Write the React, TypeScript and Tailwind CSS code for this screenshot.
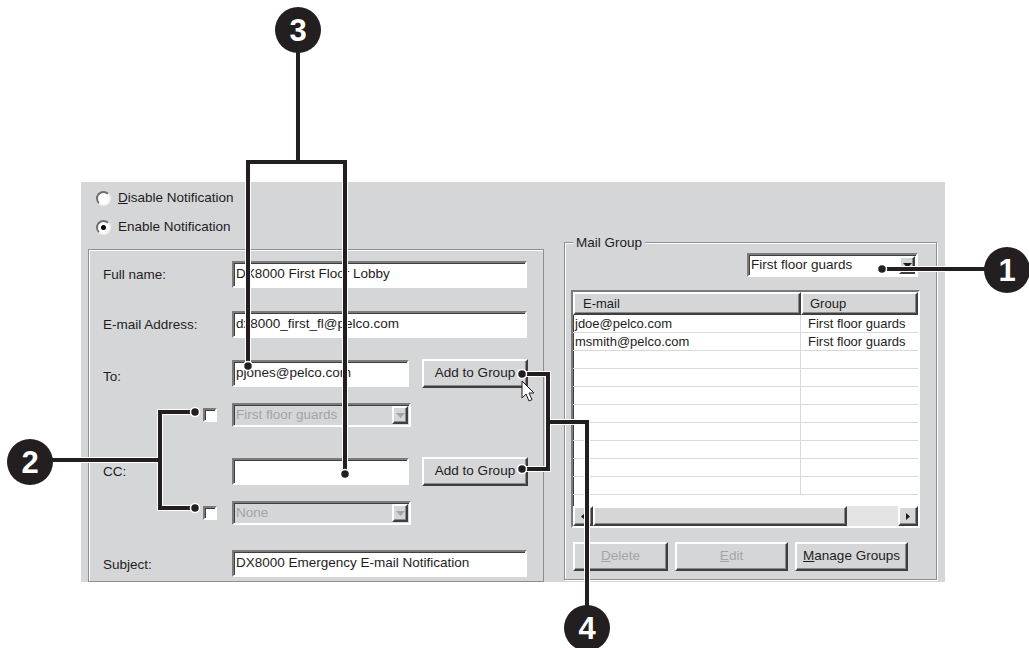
import React from 'react';

const sunken = 'border-2 border-t-[#7b7b7b] border-l-[#7b7b7b] border-b-white border-r-white shadow-[inset_1px_1px_0_#3f3f3f]';
const raised = 'border-2 border-t-white border-l-white border-b-[#3f3f3f] border-r-[#3f3f3f] shadow-[inset_-1px_-1px_0_#8a8a8a]';

const TextBox = ({ value, w }: { value: string; w: string }) => (
    <div className={`${sunken} ${w} h-[27px] bg-white flex items-center pl-[2px] whitespace-nowrap overflow-hidden`}>
        {value}
    </div>
);

const Button = ({ children, w, disabled }: { children: React.ReactNode; w: string; disabled?: boolean }) => (
    <div className={`${raised} ${w} h-[29px] bg-[#d5d6d8] flex items-center justify-center ${disabled ? 'text-[#a3a4a6]' : ''}`}>
        {children}
    </div>
);

const Arrow = ({ color }: { color: string }) => (
    <svg width="9" height="5" viewBox="0 0 9 5">
        <path d="M0 0H9L4.5 5Z" fill={color} />
    </svg>
);

const DisabledCombo = ({ value }: { value: string }) => (
    <div className={`${sunken} w-[179px] h-[24px] bg-[#d5d6d8] flex items-center justify-between text-[#a3a4a6]`}>
        <span className="pl-[2px]">{value}</span>
        <div className={`${raised} w-[16px] h-[18px] mr-[1px] flex items-center justify-center`}>
            <Arrow color="#a3a4a6" />
        </div>
    </div>
);

const CheckBox = () => (
    <div className={`${sunken} w-[14px] h-[14px] bg-white`} />
);

const Radio = ({ checked }: { checked?: boolean }) => (
    <div className="w-[15px] h-[15px] rounded-full bg-white border-2 border-t-[#6f6f6f] border-l-[#6f6f6f] border-b-[#f2f2f2] border-r-[#f2f2f2] flex items-center justify-center">
        {checked && <div className="w-[5px] h-[5px] rounded-full bg-black" />}
    </div>
);

const rows = [
    { email: 'jdoe@pelco.com', group: 'First floor guards' },
    { email: 'msmith@pelco.com', group: 'First floor guards' },
    { email: '', group: '' },
    { email: '', group: '' },
    { email: '', group: '' },
    { email: '', group: '' },
    { email: '', group: '' },
    { email: '', group: '' },
    { email: '', group: '' },
    { email: '', group: '' },
];

const Callout = ({ cx, cy, n }: { cx: number; cy: number; n: string }) => (
    <g>
        <circle cx={cx} cy={cy} r="23" fill="#231f20" />
        <text x={cx} y={cy + 11} textAnchor="middle" fill="#fff" fontSize="31" fontWeight="700"
            fontFamily="'Liberation Sans', Arial, sans-serif">{n}</text>
    </g>
);

const Dot = ({ x, y }: { x: number; y: number }) => (
    <circle cx={x} cy={y} r="4.5" fill="#231f20" stroke="#fff" strokeWidth="1.5" />
);

const App: React.FC = () => {
    return (
        <div className="relative w-[1029px] h-[648px] bg-white overflow-hidden font-['Liberation_Sans',Arial,sans-serif] text-[13.5px] text-[#1d1d1d]">
            <div className="pt-[182px] pl-[81px]">
                <div className="flex w-[864px] h-[400px] bg-[#d5d6d8] overflow-hidden">
                    {/* left side */}
                    <div className="flex flex-col pl-[7px] w-[463px] shrink-0">
                        <div className="flex flex-col pl-[8px] pt-[7px] gap-[11px]">
                            <div className="flex items-center gap-[7px] h-[18px]">
                                <Radio />
                                <span><span className="underline">D</span>isable Notification</span>
                            </div>
                            <div className="flex items-center gap-[7px] h-[18px]">
                                <Radio checked />
                                <span>Enable Notification</span>
                            </div>
                        </div>
                        <div className="mt-[13px] w-[456px] h-[400px] border border-[#8d8e90] shadow-[inset_1px_1px_0_#fff] pt-[11px]">
                            <div className="flex items-center h-[27px]">
                                <span className="w-[143px] pl-[14px] pt-[2px]">Full name:</span>
                                <TextBox value="DX8000 First Floor Lobby" w="w-[295px]" />
                            </div>
                            <div className="flex items-center h-[26px] mt-[23px]">
                                <span className="w-[143px] pl-[14px] pt-[2px]">E-mail Address:</span>
                                <TextBox value="dx8000_first_fl@pelco.com" w="w-[295px]" />
                            </div>
                            <div className="flex items-center h-[28px] mt-[22px]">
                                <span className="w-[143px] pl-[14px] pt-[8px]">To:</span>
                                <TextBox value="pjones@pelco.com" w="w-[177px]" />
                                <div className="ml-[13px]">
                                    <Button w="w-[106px]">Add to Group</Button>
                                </div>
                            </div>
                            <div className="flex items-center h-[24px] mt-[16px]">
                                <div className="w-[143px] flex justify-end pr-[15px]">
                                    <CheckBox />
                                </div>
                                <DisabledCombo value="First floor guards" />
                            </div>
                            <div className="flex items-center h-[28px] mt-[30px]">
                                <span className="w-[143px] pl-[14px] pt-[2px]">CC:</span>
                                <TextBox value="" w="w-[177px]" />
                                <div className="ml-[13px]">
                                    <Button w="w-[106px]">Add to Group</Button>
                                </div>
                            </div>
                            <div className="flex items-center h-[24px] mt-[16px]">
                                <div className="w-[143px] flex justify-end pr-[15px]">
                                    <CheckBox />
                                </div>
                                <DisabledCombo value="None" />
                            </div>
                            <div className="flex items-center h-[26px] mt-[25px]">
                                <span className="w-[143px] pl-[14px] pt-[5px]">Subject:</span>
                                <TextBox value="DX8000 Emergency E-mail Notification" w="w-[295px]" />
                            </div>
                        </div>
                    </div>

                    {/* mail group */}
                    <div className="ml-[20px] pt-[60px]">
                        <div className="relative w-[373px] h-[338px] border border-[#8d8e90] shadow-[inset_1px_1px_0_#fff,1px_1px_0_#fff] flex flex-col">
                            <span className="absolute -top-[10px] left-[8px] px-[3px] bg-[#d5d6d8]">Mail Group</span>
                            <div className="flex justify-end pr-[18px] pt-[10px]">
                                <div className={`${sunken} w-[171px] h-[24px] bg-white flex items-center justify-between`}>
                                    <span className="pl-[2px]">First floor guards</span>
                                    <div className={`${raised} w-[16px] h-[18px] mr-[1px] bg-[#d5d6d8] flex items-center justify-center`}>
                                        <Arrow color="#1d1d1d" />
                                    </div>
                                </div>
                            </div>
                            <div className={`${sunken} ml-[6px] mt-[13px] w-[349px] h-[238px] bg-white flex flex-col overflow-hidden text-[13px]`}>
                                <div className="flex h-[23px] shrink-0">
                                    <div className={`${raised} w-[228px] bg-[#d5d6d8] pl-[8px] flex items-center`}>E-mail</div>
                                    <div className={`${raised} flex-1 bg-[#d5d6d8] pl-[7px] flex items-center`}>Group</div>
                                </div>
                                <div className="flex-1 overflow-hidden">
                                    {rows.map((r, i) => (
                                        <div key={i} className="flex h-[18px] border-b border-[#d9d9d9]">
                                            <div className="w-[228px] pl-[2px] border-r border-[#d9d9d9] leading-[18px]">{r.email}</div>
                                            <div className="flex-1 pl-[7px] leading-[18px] whitespace-nowrap">{r.group}</div>
                                        </div>
                                    ))}
                                </div>
                                <div className="flex h-[20px] shrink-0 bg-[#d5d6d8]">
                                    <div className={`${raised} w-[20px] flex items-center justify-center`}>
                                        <svg width="4" height="7" viewBox="0 0 4 7"><path d="M4 0V7L0 3.5Z" fill="#1d1d1d" /></svg>
                                    </div>
                                    <div className={`${raised} w-[254px]`} />
                                    <div className="flex-1 bg-[#e4e4e4]" />
                                    <div className={`${raised} w-[20px] flex items-center justify-center`}>
                                        <svg width="4" height="7" viewBox="0 0 4 7"><path d="M0 0V7L4 3.5Z" fill="#1d1d1d" /></svg>
                                    </div>
                                </div>
                            </div>
                            <div className="flex gap-[7px] ml-[8px] mt-[14px]">
                                <Button w="w-[95px]" disabled><span><span className="underline">D</span>elete</span></Button>
                                <Button w="w-[113px]" disabled><span><span className="underline">E</span>dit</span></Button>
                                <Button w="w-[113px]"><span><span className="underline">M</span>anage Groups</span></Button>
                            </div>
                        </div>
                    </div>
                </div>
            </div>

            {/* callouts */}
            <svg className="absolute inset-0 pointer-events-none" width="1029" height="648" viewBox="0 0 1029 648">
                <g transform="translate(522 381)">
                    <path d="M0 0V17L4 13L7 20L10 18.6L7 12H12Z" fill="#fff" stroke="#1d1d1d" strokeWidth="1" strokeLinejoin="round" />
                </g>
                <g fill="none" strokeLinejoin="miter">
                    <g stroke="#fff" strokeWidth="6">
                        <path d="M298 30V162M248 366V162H345V474" />
                        <path d="M30 460H160M195 412H160V508H195" />
                        <path d="M882 269H1007" />
                        <path d="M522 374H548V469H522M548 422H587V628" />
                    </g>
                    <g stroke="#231f20" strokeWidth="4">
                        <path d="M298 30V162M248 366V162H345V474" />
                        <path d="M30 460H160M195 412H160V508H195" />
                        <path d="M882 269H1007" />
                        <path d="M522 374H548V469H522M548 422H587V628" />
                    </g>
                </g>
                <Dot x={248} y={366} />
                <Dot x={345} y={474} />
                <Dot x={195} y={412} />
                <Dot x={195} y={508} />
                <Dot x={882} y={269} />
                <Dot x={522} y={374} />
                <Dot x={522} y={469} />
                <Callout cx={298} cy={30} n="3" />
                <Callout cx={30} cy={462} n="2" />
                <Callout cx={1007} cy={270} n="1" />
                <Callout cx={587} cy={628} n="4" />
            </svg>
        </div>
    );
};

export default App;
